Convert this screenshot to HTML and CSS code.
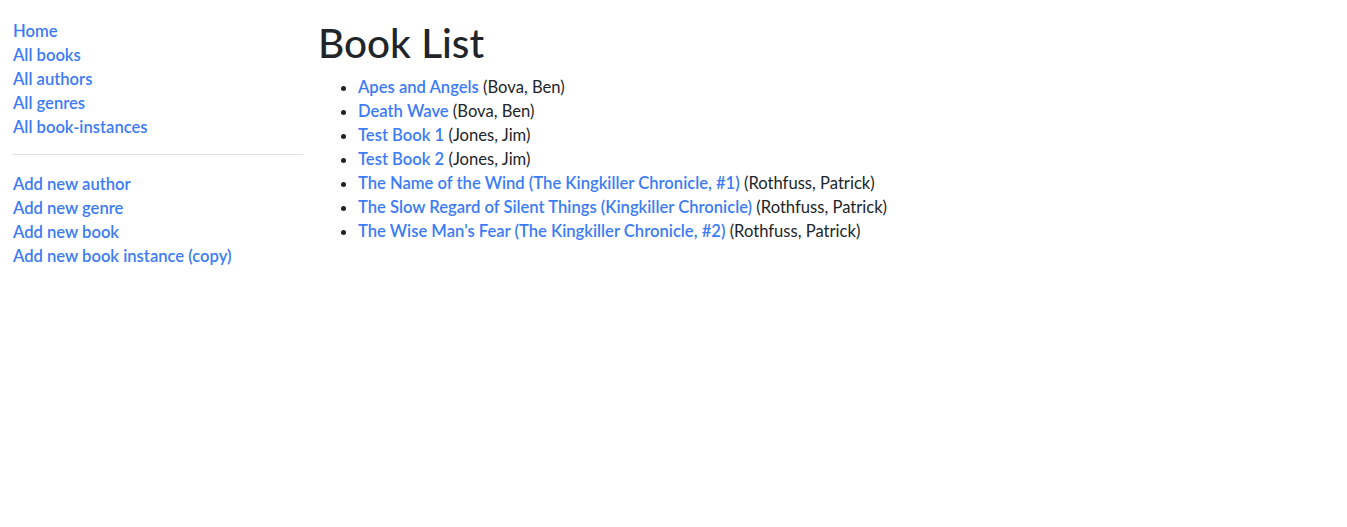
FILE: index.html
```html
<!DOCTYPE html>
<html lang="en">
<head>
<meta charset="utf-8">
<title>Local Library</title>
<link rel="stylesheet" href="styles.css">
</head>
<body>
<div class="page">
  <nav class="sidebar">
    <ul class="nav-list">
      <li><a href="#">Home</a></li>
      <li><a href="#">All books</a></li>
      <li><a href="#">All authors</a></li>
      <li><a href="#">All genres</a></li>
      <li><a href="#">All book-instances</a></li>
    </ul>
    <hr class="divider">
    <ul class="nav-list">
      <li><a href="#">Add new author</a></li>
      <li><a href="#">Add new genre</a></li>
      <li><a href="#">Add new book</a></li>
      <li><a href="#">Add new book instance (copy)</a></li>
    </ul>
  </nav>
  <main class="content">
    <h1 class="title">Book List</h1>
    <ul class="book-list">
      <li><a href="#">Apes and Angels</a> (Bova, Ben)</li>
      <li><a href="#">Death Wave</a> (Bova, Ben)</li>
      <li><a href="#">Test Book 1</a> (Jones, Jim)</li>
      <li><a href="#">Test Book 2</a> (Jones, Jim)</li>
      <li><a href="#">The Name of the Wind (The Kingkiller Chronicle, #1)</a> (Rothfuss, Patrick)</li>
      <li><a href="#">The Slow Regard of Silent Things (Kingkiller Chronicle)</a> (Rothfuss, Patrick)</li>
      <li><a href="#">The Wise Man's Fear (The Kingkiller Chronicle, #2)</a> (Rothfuss, Patrick)</li>
    </ul>
  </main>
</div>
</body>
</html>
```

FILE: styles.css
```css
html, body {
  margin: 0;
  padding: 0;
  background: #fff;
}
body {
  font-family: Lato, "Noto Sans", sans-serif;
  font-size: 16.6px;
  line-height: 24px;
  color: #212529;
}
a {
  color: #3b7cf6;
  text-decoration: none;
  font-weight: 600;
}
.page {
  display: flex;
  padding-top: 19px;
}
.sidebar {
  width: 290px;
  margin-left: 13px;
}
.nav-list {
  list-style: none;
  margin: 0;
  padding: 0;
}
.divider {
  margin: 15px 0 17px;
  border: 0;
  border-top: 1px solid #e3e3e3;
}
.content {
  margin-left: 15px;
}
.title {
  margin: 0 0 8px 0;
  font-size: 40.5px;
  line-height: 48px;
  font-weight: 500;
  color: #212529;
}
.book-list {
  margin: 0;
  padding-left: 40px;
}
```
